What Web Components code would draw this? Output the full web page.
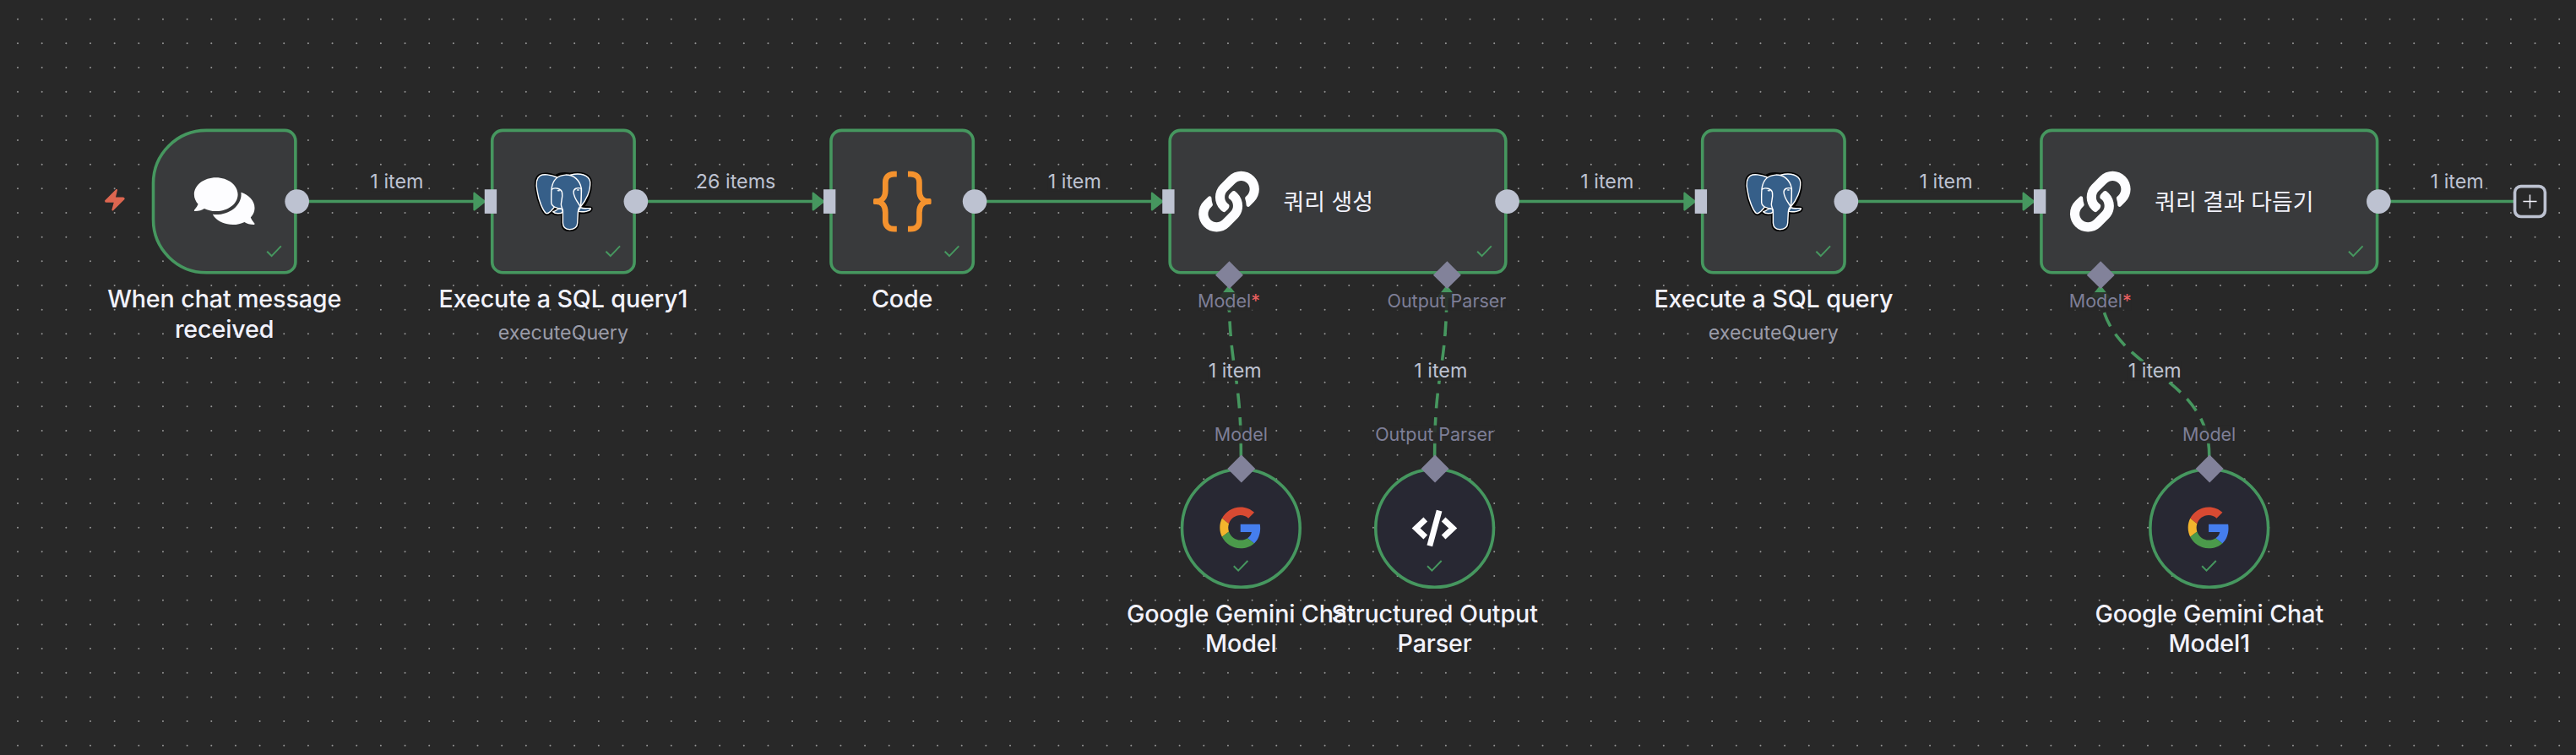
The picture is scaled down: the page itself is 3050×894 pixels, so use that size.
<!DOCTYPE html>
<html lang="ko">
<head>
<meta charset="utf-8">
<title>Workflow canvas</title>
<style>
html, body { margin: 0; height: 100%; background: #282828; overflow: hidden; }
body { font-family: Inter, "Noto Sans CJK KR", sans-serif; }
</style>
</head>
<body>
<flow-canvas>
  <flow-edge from="104 48" to="220 48" label="1 item"></flow-edge>
  <flow-edge from="328 48" to="444 48" label="26 items"></flow-edge>
  <flow-edge from="552 48" to="668 48" label="1 item"></flow-edge>
  <flow-edge from="904 48" to="1020 48" label="1 item"></flow-edge>
  <flow-edge from="1128 48" to="1244 48" label="1 item"></flow-edge>
  <flow-edge from="1480 48" to="1562 48" label="1 item" label-shift="2.8" open></flow-edge>
  <flow-edge from="720 215.7" to="712 104.3" label="1 item" dashed></flow-edge>
  <flow-edge from="848 215.7" to="856 104.3" label="1 item" dashed></flow-edge>
  <flow-edge from="1360 215.7" to="1288 104.3" label="1 item" dashed></flow-edge>

  <flow-node x="0" y="0" kind="trigger" name="When chat message received"><flow-icon name="chat"></flow-icon><flow-port kind="out"></flow-port></flow-node>
  <flow-node x="224" y="0" name="Execute a SQL query1" sub="executeQuery"><flow-icon name="postgres"></flow-icon><flow-port kind="in"></flow-port><flow-port kind="out"></flow-port></flow-node>
  <flow-node x="448" y="0" name="Code"><flow-icon name="braces"></flow-icon><flow-port kind="in"></flow-port><flow-port kind="out"></flow-port></flow-node>
  <flow-node x="672" y="0" kind="wide" name="쿼리 생성"><flow-icon name="link"></flow-icon><flow-port kind="in"></flow-port><flow-port kind="out"></flow-port><flow-port kind="bottom" at="40" label="Model" required></flow-port><flow-port kind="bottom" at="184" label="Output Parser"></flow-port></flow-node>
  <flow-node x="1024" y="0" name="Execute a SQL query" sub="executeQuery"><flow-icon name="postgres"></flow-icon><flow-port kind="in"></flow-port><flow-port kind="out"></flow-port></flow-node>
  <flow-node x="1248" y="0" kind="wide" name="쿼리 결과 다듬기"><flow-icon name="link"></flow-icon><flow-port kind="in"></flow-port><flow-port kind="out"></flow-port><flow-port kind="bottom" at="40" label="Model" required></flow-port></flow-node>
  <flow-node x="680" y="224" kind="round" name="Google Gemini Chat Model"><flow-icon name="google"></flow-icon><flow-port kind="top" at="40" label="Model"></flow-port></flow-node>
  <flow-node x="808" y="224" kind="round" name="Structured Output Parser"><flow-icon name="tag"></flow-icon><flow-port kind="top" at="40" label="Output Parser"></flow-port></flow-node>
  <flow-node x="1320" y="224" kind="round" name="Google Gemini Chat Model1"><flow-icon name="google"></flow-icon><flow-port kind="top" at="40" label="Model"></flow-port></flow-node>
  <flow-add x="1561" y="37"></flow-add>
</flow-canvas>

<script>
const ICONS = {
  chat: ['0 0 576 512', 40, 35.56, '<path fill="#fdfdff" d="M416 192c0-88.4-93.1-160-208-160S0 103.6 0 192c0 34.3 14.1 65.9 38 92-13.4 30.2-35.5 54.2-35.8 54.5-2.2 2.3-2.8 5.7-1.5 8.7S4.8 352 8 352c36.6 0 66.9-12.3 88.7-25 32.2 15.7 70.3 25 111.3 25 114.9 0 208-71.6 208-160zm122 220c23.9-26 38-57.7 38-92 0-66.9-53.5-124.2-129.3-148.1.9 6.6 1.3 13.3 1.3 20.1 0 105.9-107.7 192-240 192-10.8 0-21.3-.8-31.7-1.9C207.8 439.6 281.8 480 368 480c41 0 79.1-9.2 111.3-25 21.8 12.7 52.1 25 88.7 25 3.2 0 6.1-1.9 7.3-4.8 1.3-2.9.7-6.3-1.5-8.7-.3-.2-22.4-24.2-35.8-54.5z"/>'],
  link: ['0 0 512 512', 40, 40, '<path fill="#fdfdff" d="M326.612 185.391c59.747 59.809 58.927 155.698.36 214.59-.11.12-.24.25-.36.37l-67.2 67.2c-59.27 59.27-155.699 59.262-214.96 0-59.27-59.26-59.27-155.7 0-214.96l37.106-37.106c9.84-9.84 26.786-3.3 27.294 10.606.648 17.722 3.826 35.527 9.69 52.721 1.986 5.822.567 12.262-3.783 16.612l-13.087 13.087c-28.026 28.026-28.905 73.66-1.155 101.96 28.024 28.579 74.086 28.749 102.325.51l67.2-67.19c28.191-28.191 28.073-73.757 0-101.83-3.701-3.694-7.429-6.564-10.341-8.569a16.037 16.037 0 0 1-6.947-12.606c-.396-10.567 3.348-21.456 11.698-29.806l21.054-21.055c5.521-5.521 14.182-6.199 20.584-1.731a152.482 152.482 0 0 1 20.522 17.197zM467.547 44.449c-59.261-59.262-155.69-59.27-214.96 0l-67.2 67.2c-.12.12-.25.25-.36.37-58.566 58.892-59.387 154.781.36 214.59a152.454 152.454 0 0 0 20.521 17.196c6.402 4.468 15.064 3.789 20.584-1.731l21.054-21.055c8.35-8.35 12.094-19.239 11.698-29.806a16.037 16.037 0 0 0-6.947-12.606c-2.912-2.005-6.64-4.875-10.341-8.569-28.073-28.073-28.191-73.639 0-101.83l67.2-67.19c28.239-28.239 74.3-28.069 102.325.51 27.75 28.3 26.872 73.934-1.155 101.96l-13.087 13.087c-4.35 4.35-5.769 10.79-3.783 16.612 5.864 17.194 9.042 34.999 9.69 52.721.509 13.906 17.454 20.446 27.294 10.606l37.106-37.106c59.271-59.259 59.271-155.699.001-214.959z"/>'],
  braces: ['397 249 215 215', 40, 40, '<g fill="none" stroke="#f4922e" stroke-width="20"><path d="M485.500 259H476C456 259 445 270 445 288V318C445 342 432 356.500 412 356.500C432 356.500 445 371 445 395V425C445 443 456 454 476 454H485.500"/><path d="M525 259H534.500C554.500 259 565.500 270 565.500 288V318C565.500 342 578.500 356.500 598.500 356.500C578.500 356.500 565.500 371 565.500 395V425C565.500 443 554.500 454 534.500 454H525"/><path stroke-linecap="round" stroke-width="10" d="M407 351v11M603 351v11"/><path stroke-width="21" d="M406 356.500H425M604 356.500H585"/></g>'],
  google: ['0 0 48 48', 27.3, 27.3, '<path fill="#d84a32" d="M24 9.500c3.540 0 6.710 1.220 9.210 3.600l6.850-6.850C35.900 2.380 30.470 0 24 0 14.620 0 6.510 5.380 2.560 13.220l7.980 6.190C12.430 13.720 17.740 9.500 24 9.500z"/><path fill="#457eee" d="M46.980 24.550c0-1.570-.15-3.090-.38-4.550H24v9.020h12.940c-.58 2.960-2.260 5.480-4.780 7.180l7.730 6c4.510-4.180 7.090-10.360 7.090-17.650z"/><path fill="#f3b42d" d="M10.530 28.590c-.48-1.450-.76-2.990-.76-4.590s.27-3.140.76-4.590l-7.980-6.190C.92 16.460 0 20.120 0 24c0 3.880.92 7.540 2.560 10.780l7.970-6.190z"/><path fill="#4b9a4b" d="M24 48c6.480 0 11.930-2.130 15.890-5.810l-7.730-6c-2.150 1.450-4.920 2.300-8.160 2.300-6.260 0-11.570-4.220-13.470-9.910l-7.980 6.190C6.510 42.620 14.620 48 24 48z"/>'],
  tag: ['1056 792 160 129', 29.8, 24, '<g fill="none" stroke="#fdfdff" stroke-width="20.500"><path d="M1104 825L1070.500 856.500L1104 888M1168 825L1201.500 856.500L1168 888"/><path d="M1153 794L1119 919"/></g>'],
  postgres: ['33 38 216 216', 40.2, 40.2, `
    <g stroke-linejoin="round" stroke-linecap="round">
      <path fill="#000" stroke="#000" stroke-width="14" d="M112 58C95 50 70 47 58 54C45 62 43 84 48 108C53 142 68 178 79 187C85 191 90 186 97 179L106 171L105 184C114 190 130 190 139 183V222C140 238 148 245 162 245C180 245 189 236 190 222L193 182C210 184 238 182 238 171C228 168 222 170 206 166C224 145 238 108 236 76C232 50 200 43 166 51C145 47 125 50 112 58Z"/>
      <g fill="#365f89" stroke="#fff" stroke-width="4.200">
        <path d="M166 51C200 43 232 50 236 76C238 108 222 142 202 164L180 150V70Z"/>
        <path d="M117 59C95 50 70 47 58 54C45 62 43 84 48 108C53 142 68 178 79 187C85 191 90 186 97 179L112 162L120 100Z"/>
        <path d="M128 171C118 171 118 179 104 182C112 190 130 190 139 183V172Z"/>
        <path d="M193 181C210 184 238 181 238 170C228 168 216 173 202 167Z"/>
        <path d="M98 148C98 130 97 112 100 94C105 68 118 53 148 51C178 50 200 70 205 100C206 120 202 140 202 162C196 166 194 172 193 182L191 222C190 236 180 245 163 245C148 245 140 238 139 222V178C138 168 128 172 118 168C104 164 98 156 98 148Z"/>
        <path fill="none" d="M100 102C112 95 132 99 136 112C140 130 132 146 133 158C134 166 139 172 139 182"/>
        <path d="M204 99C190 95 177 100 177 112C177 130 190 146 202 164C204 140 206 120 204 99Z"/>
      </g>
      <g fill="#fff" stroke="none"><ellipse cx="124" cy="107" rx="5.500" ry="2.400"/><ellipse cx="193" cy="105" rx="5" ry="2.200"/></g>
    </g>`]
};

function shadow(el, html) {
  const t = document.createElement('template');
  t.innerHTML = html;
  el.attachShadow({ mode: 'open' }).append(t.content.cloneNode(true));
}

/* Dotted backdrop plus the scaled, panned viewport that holds nodes and edges. */
class FlowCanvas extends HTMLElement {
  connectedCallback() {
    let d = '';
    for (let j = 0; j < 32; j++)
      for (let i = -1; i < 107; i++)
        d += `M${(21 + i * 28.659).toFixed(2)} ${(22.7 + j * 28.667).toFixed(2)}h.01`;
    shadow(this, `<style>
      :host { display: block; position: relative; width: 3050px; height: 894px; background: #282828; overflow: hidden; }
      svg { display: block; width: 100%; height: 100%; }
      .view { position: absolute; left: 0; top: 0; width: 0; height: 0; transform-origin: 0 0; transform: translate(179.700px, 152.600px) scale(1.7912); }
    </style>
    <svg viewBox="0 0 3050 894"><path d="${d}" stroke="#949494" stroke-width="2" stroke-linecap="round"/></svg>
    <div class="view"><slot></slot></div>`);
  }
}

class FlowIcon extends HTMLElement {
  connectedCallback() {
    const [box, w, h, body] = ICONS[this.getAttribute('name')];
    shadow(this, `<style>:host { display: block; flex: none; } svg { display: block; overflow: visible; }</style>
      <svg width="${w}" height="${h}" viewBox="${box}">${body}</svg>`);
  }
}

class FlowNode extends HTMLElement {
  connectedCallback() {
    const kind = this.getAttribute('kind') || 'plain';
    const name = this.getAttribute('name'), sub = this.getAttribute('sub');
    const wide = kind === 'wide', round = kind === 'round';
    const w = wide ? 224 : round ? 80 : 96, h = round ? 80 : 96;
    const radius = round ? '50%' : kind === 'trigger' ? '36px 8px 8px 36px' : '8px';
    shadow(this, `<style>
      :host { display: block; position: absolute; left: ${this.getAttribute('x')}px; top: ${this.getAttribute('y')}px; width: ${w}px; height: ${h}px; }
      .box { box-sizing: border-box; width: 100%; height: 100%; display: flex; align-items: center; justify-content: ${wide ? 'flex-start' : 'center'};
        gap: 16px; padding-left: ${wide ? 18 : 0}px; border: 2px solid #46975f; border-radius: ${radius}; background: ${round ? '#282833' : '#393a3c'}; }
      .title { font-size: 16px; line-height: 20px; font-weight: 500; letter-spacing: -.07px; color: #f2f2fb; }
      .wide { font-size: 15px; font-weight: 400; letter-spacing: 0; white-space: nowrap; padding-top: 1.300px; }
      .caption { position: absolute; top: ${h + 5.600}px; left: 50%; width: 176px; margin-left: -88px; text-align: center; }
      .sub { margin-top: 4px; font-size: 13px; line-height: 17px; color: #9a9ba8; }
      .check { position: absolute; width: 12px; height: 10px; ${round ? 'left: 34px; top: 60px' : 'right: 9px; top: 76px'}; }
      .bolt { position: absolute; left: -31.700px; top: 38.800px; width: 16px; height: 17px; overflow: visible; }
    </style>
    <div class="box"><slot></slot>${wide ? `<span class="title wide">${name}</span>` : ''}</div>
    <svg class="check" viewBox="0 0 12 10"><path d="M1.200 5L4.200 8L10.500 1.500" fill="none" stroke="#46975f" stroke-width="1.100"/></svg>
    ${kind === 'trigger' ? '<svg class="bolt" viewBox="370 668 86 91"><path d="M417 675L378 714.500C378 716 379 717 381 717H411L403 746L443 706.500C442 705 441 704 439 704H410Z" fill="#dd6650" stroke="#dd6650" stroke-width="6" stroke-linejoin="round"/></svg>' : ''}
    ${wide ? '' : `<div class="caption"><div class="title">${name}</div>${sub ? `<div class="sub">${sub}</div>` : ''}</div>`}`);
  }
}

class FlowPort extends HTMLElement {
  connectedCallback() {
    const kind = this.getAttribute('kind'), at = this.getAttribute('at'), label = this.getAttribute('label');
    const pos = { in: 'left: 0; top: 48px', out: 'left: 100%; top: 48px', top: `left: ${at}px; top: 0`, bottom: `left: ${at}px; top: 100%` }[kind];
    const shape = { in: 'width: 8px; height: 16px', out: 'width: 16px; height: 16px; border-radius: 50%' }[kind]
      || 'width: 12.500px; height: 12.500px; rotate: 45deg; background: #82829a';
    shadow(this, `<style>
      :host { position: absolute; ${pos}; width: 0; height: 0; display: flex; align-items: center; justify-content: center; }
      .shape { flex: none; background: #bdc2d1; ${shape}; }
      .label { position: absolute; top: ${kind === 'top' ? -28.200 : 11.800}px; left: 0; transform: translateX(-50%); white-space: nowrap;
        font-size: 12px; line-height: 12px; color: #7e7f97; background: rgba(40,40,40,.88); }
      b { font-weight: 400; color: #ea5f5f; }
    </style>
    <div class="shape"></div>${label ? `<div class="label">${label}${this.hasAttribute('required') ? '<b>*</b>' : ''}</div>` : ''}`);
  }
}

class FlowEdge extends HTMLElement {
  connectedCallback() {
    const [x1, y1] = this.getAttribute('from').split(' ').map(Number);
    const [x2, y2] = this.getAttribute('to').split(' ').map(Number);
    const dashed = this.hasAttribute('dashed');
    const my = (y1 + y2) / 2, mx = (x1 + x2) / 2 + Number(this.getAttribute('label-shift') || 0);
    const d = dashed ? `M${x1} ${y1}C${x1} ${my} ${x2} ${my} ${x2} ${y2}` : `M${x1 - 2} ${y1}L${x2} ${y2}`;
    const arrow = this.hasAttribute('open') ? '' :
      `<path transform="translate(${x2} ${y2}) rotate(${dashed ? -90 : 0}) scale(1.360)" d="M-5-4L0 0L-5 4Z" fill="#46975f" stroke="#46975f" stroke-linejoin="round"/>`;
    shadow(this, `<style>
      :host { display: block; position: absolute; left: 0; top: 0; width: 0; height: 0; }
      svg { position: absolute; left: 0; top: 0; width: 1px; height: 1px; overflow: visible; }
      span { position: absolute; left: ${mx}px; top: ${dashed ? my : my - 13}px; transform: translate(-50%, -50%); white-space: nowrap;
        font-size: 13px; line-height: 13px; color: #bdc2d1; background: rgba(40,40,40,.9); }
    </style>
    <svg><path d="${d}" fill="none" stroke="#46975f" stroke-width="2" ${dashed ? 'stroke-linecap="square" stroke-dasharray="8 8"' : ''}/>${arrow}</svg>
    <span>${this.getAttribute('label')}</span>`);
  }
}

class FlowAdd extends HTMLElement {
  connectedCallback() {
    shadow(this, `<style>
      :host { box-sizing: border-box; position: absolute; left: ${this.getAttribute('x')}px; top: ${this.getAttribute('y')}px; width: 22px; height: 22px;
        display: flex; align-items: center; justify-content: center; border: 2px solid #bdc2d1; border-radius: 5px; background: #282828; }
    </style><svg width="10" height="10" viewBox="0 0 10 10"><path d="M.5 5H9.500M5 .5V9.500" stroke="#f2f2fb" stroke-width=".8"/></svg>`);
  }
}

customElements.define('flow-canvas', FlowCanvas);
customElements.define('flow-icon', FlowIcon);
customElements.define('flow-port', FlowPort);
customElements.define('flow-node', FlowNode);
customElements.define('flow-edge', FlowEdge);
customElements.define('flow-add', FlowAdd);
</script>
</body>
</html>
